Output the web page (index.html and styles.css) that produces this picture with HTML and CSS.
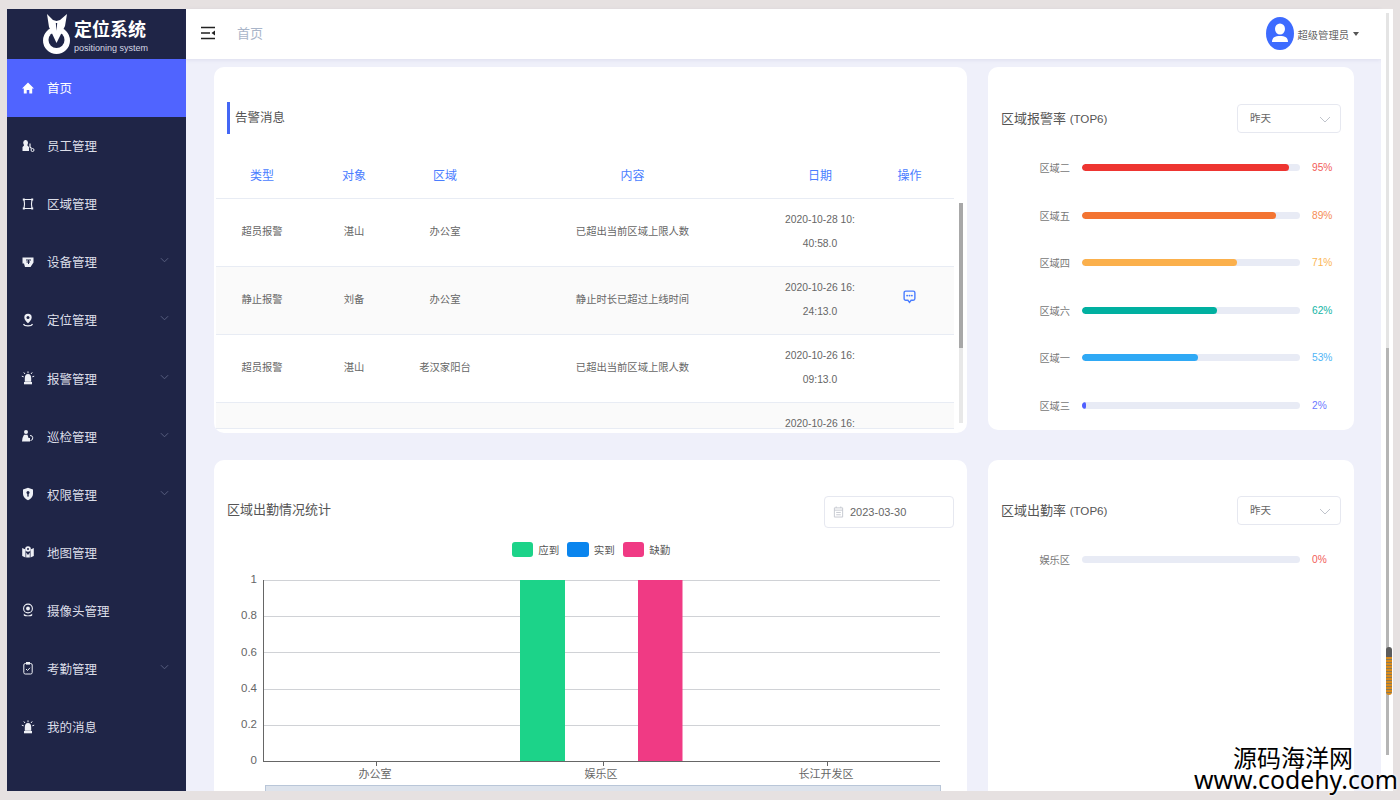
FILE: index.html
```html
<!DOCTYPE html>
<html lang="zh-CN">
<head>
    <meta charset="UTF-8">
    <title>定位系统</title>
    <link rel="stylesheet" href="styles.css">
</head>
<body>
    <div class="app">
        <aside class="sidebar">
            <div class="brand">
                <svg class="brand-logo" viewBox="0 0 27 40">
                    <circle cx="13.5" cy="26.5" r="13.5" fill="#fff"/>
                    <circle cx="13.5" cy="26" r="8" fill="#1f2547"/>
                    <path d="M4 0 L10 6 L13.5 7 L17 6 L24 0 L22 12 L13.5 29 L6 13 Z" fill="#fff"/>
                    <path d="M12.8 9 L13.5 17 L14.2 9 Z" fill="#1f2547"/>
                </svg>
                <div class="brand-text">
                    <div class="brand-name">定位系统</div>
                    <div class="brand-sub">positioning system</div>
                </div>
            </div>
            <nav class="menu">
                <a class="menu-item active">
                    <svg class="menu-icon" viewBox="0 0 14 14"><path d="M7 1.5 L13 7.5 L11.2 7.5 L11.2 12.5 L8.3 12.5 L8.3 9 L5.7 9 L5.7 12.5 L2.8 12.5 L2.8 7.5 L1 7.5 Z" fill="#fff"/></svg>
                    <span>首页</span>
                </a>
                <a class="menu-item">
                    <svg class="menu-icon" viewBox="0 0 14 14"><path d="M4.5 1 A2.3 2.8 0 0 1 7 3.5 C7 5 6.4 5.5 6.4 6.5 L8 8 L8 12 L1.5 12 L1.5 8 L3 6.5 C3 5.5 2.2 5 2.2 3.5 A2.2 2.8 0 0 1 4.5 1 Z" fill="#eef0f6"/><path d="M9 4.5 L9 8 L10.5 9.5" stroke="#eef0f6" fill="none" stroke-width="1.2"/><circle cx="11.5" cy="11" r="1.5" stroke="#eef0f6" fill="none"/></svg>
                    <span>员工管理</span>
                </a>
                <a class="menu-item">
                    <svg class="menu-icon" viewBox="0 0 14 14"><path d="M3 2.5 H11 C10.4 5 10.4 9 11 11.5 H3 C3.6 9 3.6 5 3 2.5 Z" stroke="#eef0f6" fill="none" stroke-width="1.1"/><rect x="1.8" y="1.5" width="2" height="2" fill="#eef0f6"/><rect x="10.2" y="1.5" width="2" height="2" fill="#eef0f6"/><rect x="1.8" y="10.5" width="2" height="2" fill="#eef0f6"/><rect x="10.2" y="10.5" width="2" height="2" fill="#eef0f6"/></svg>
                    <span>区域管理</span>
                </a>
                <a class="menu-item has-sub">
                    <svg class="menu-icon" viewBox="0 0 14 14"><path d="M1.5 2.5 H12.5 V7.5 L9.5 12 H4 L3 8.5 H1.5 Z" fill="#eef0f6"/><path d="M5 5 H10 M7.5 5 V9 M5.5 7 H9" stroke="#1f2547" stroke-width="1" fill="none"/></svg>
                    <span>设备管理</span>
                    <svg class="menu-arrow" viewBox="0 0 10 6"><path d="M1 1 L5 5 L9 1" fill="none" stroke="currentColor"/></svg>
                </a>
                <a class="menu-item has-sub">
                    <svg class="menu-icon" viewBox="0 0 14 14"><path d="M7 .8 A3.7 3.7 0 0 1 10.7 4.5 C10.7 6.8 8.3 9 7 10.2 C5.7 9 3.3 6.8 3.3 4.5 A3.7 3.7 0 0 1 7 .8 Z" fill="#eef0f6"/><circle cx="7" cy="4.5" r="1.5" fill="#1f2547"/><path d="M2.5 11 C3.5 13.5 10.5 13.5 11.5 11" stroke="#eef0f6" fill="none" stroke-width="1.1"/></svg>
                    <span>定位管理</span>
                    <svg class="menu-arrow" viewBox="0 0 10 6"><path d="M1 1 L5 5 L9 1" fill="none" stroke="currentColor"/></svg>
                </a>
                <a class="menu-item has-sub">
                    <svg class="menu-icon" viewBox="0 0 14 14"><path d="M7 3 C9.3 3 10.2 4.8 10.2 7 V10.8 H3.8 V7 C3.8 4.8 4.7 3 7 3 Z" fill="#eef0f6"/><rect x="3" y="11" width="8" height="2.3" fill="#eef0f6"/><path d="M7 .4 V2.2 M2.8 1.4 L4 3 M11.2 1.4 L10 3 M.8 5.2 L2.7 5.8 M13.2 5.2 L11.3 5.8" stroke="#eef0f6" fill="none"/></svg>
                    <span>报警管理</span>
                    <svg class="menu-arrow" viewBox="0 0 10 6"><path d="M1 1 L5 5 L9 1" fill="none" stroke="currentColor"/></svg>
                </a>
                <a class="menu-item has-sub">
                    <svg class="menu-icon" viewBox="0 0 14 14"><circle cx="5" cy="3" r="2" fill="#eef0f6"/><path d="M3 5.8 H6.5 L7.5 9 H9 V12.5 H1 L1.5 9 Z" fill="#eef0f6"/><path d="M9 6.5 A2.5 2.5 0 1 1 9.5 11.5" stroke="#eef0f6" fill="none"/></svg>
                    <span>巡检管理</span>
                    <svg class="menu-arrow" viewBox="0 0 10 6"><path d="M1 1 L5 5 L9 1" fill="none" stroke="currentColor"/></svg>
                </a>
                <a class="menu-item has-sub">
                    <svg class="menu-icon" viewBox="0 0 14 14"><path d="M7 .8 L12 2.6 V7 C12 10 9.5 12 7 13.2 C4.5 12 2 10 2 7 V2.6 Z" fill="#eef0f6"/><circle cx="7" cy="5.5" r="1.5" fill="#1f2547"/><rect x="6.3" y="6" width="1.4" height="3.6" fill="#1f2547"/></svg>
                    <span>权限管理</span>
                    <svg class="menu-arrow" viewBox="0 0 10 6"><path d="M1 1 L5 5 L9 1" fill="none" stroke="currentColor"/></svg>
                </a>
                <a class="menu-item">
                    <svg class="menu-icon" viewBox="0 0 14 14"><path d="M1.2 3 L4.5 4.5 L4.5 12.5 L1.2 11 Z M9.5 4.5 L12.8 3 L12.8 11 L9.5 12.5 Z M5.2 7.5 L7 10 L8.8 7.5 V12.5 H5.2 Z" fill="#eef0f6"/><circle cx="7" cy="4" r="2.8" fill="#eef0f6"/><circle cx="7" cy="4" r="1" fill="#1f2547"/></svg>
                    <span>地图管理</span>
                </a>
                <a class="menu-item">
                    <svg class="menu-icon" viewBox="0 0 14 14"><circle cx="7" cy="5.5" r="4.4" fill="none" stroke="#eef0f6" stroke-width="1.1"/><circle cx="7" cy="5.5" r="1.9" fill="#eef0f6"/><path d="M2.8 10.6 C4 13 10 13 11.2 10.6 V12.4 C10 13.6 4 13.6 2.8 12.4 Z" fill="#eef0f6"/></svg>
                    <span>摄像头管理</span>
                </a>
                <a class="menu-item has-sub">
                    <svg class="menu-icon" viewBox="0 0 14 14"><rect x="2.8" y="2.5" width="8.4" height="10.5" rx="1.5" fill="none" stroke="#eef0f6"/><rect x="5" y="1" width="4" height="2.6" fill="#eef0f6"/><path d="M5 8 L6.5 9.5 L9 6.8" stroke="#eef0f6" fill="none"/></svg>
                    <span>考勤管理</span>
                    <svg class="menu-arrow" viewBox="0 0 10 6"><path d="M1 1 L5 5 L9 1" fill="none" stroke="currentColor"/></svg>
                </a>
                <a class="menu-item">
                    <svg class="menu-icon" viewBox="0 0 14 14"><path d="M7 3 C9.3 3 10.2 4.8 10.2 7 V10.8 H3.8 V7 C3.8 4.8 4.7 3 7 3 Z" fill="#eef0f6"/><rect x="3" y="11" width="8" height="2.3" fill="#eef0f6"/><path d="M7 .4 V2.2 M2.8 1.4 L4 3 M11.2 1.4 L10 3 M.8 5.2 L2.7 5.8 M13.2 5.2 L11.3 5.8" stroke="#eef0f6" fill="none"/></svg>
                    <span>我的消息</span>
                </a>
            </nav>
        </aside>

        <div class="content">
            <header class="topbar">
                <svg class="fold-icon" viewBox="0 0 14 14"><path d="M0 1.5 H14 M0 7 H9 M0 12.5 H14" stroke="#222" stroke-width="1.6" fill="none"/><path d="M14 4.5 V9.5 L10.5 7 Z" fill="#222"/></svg>
                <span class="crumb">首页</span>
                <div class="user">
                    <svg class="avatar" viewBox="0 0 28 33">
                        <ellipse cx="14" cy="16.5" rx="14" ry="16.5" fill="#3d6bff"/>
                        <ellipse cx="14" cy="12" rx="5" ry="5.5" fill="#fff"/>
                        <path d="M6 25 C6 20.5 9 19 14 19 C19 19 22 20.5 22 25 Z" fill="#fff"/>
                    </svg>
                    <span class="user-name">超级管理员</span>
                    <span class="caret"></span>
                </div>
            </header>

            <main class="main">
                <section class="card card-alarm">
                    <div class="alarm-title">告警消息</div>
                    <div class="table-wrap">
                        <table class="alarm-table">
                            <colgroup>
                                <col class="col-a"><col class="col-a"><col class="col-b"><col class="col-c"><col class="col-b"><col class="col-d">
                            </colgroup>
                            <thead>
                                <tr><th>类型</th><th>对象</th><th>区域</th><th>内容</th><th>日期</th><th>操作</th></tr>
                            </thead>
                            <tbody>
                                <tr><td>超员报警</td><td>湛山</td><td>办公室</td><td>已超出当前区域上限人数</td><td class="date">2020-10-28 10:40:58.0</td><td></td></tr>
                                <tr><td>静止报警</td><td>刘备</td><td>办公室</td><td>静止时长已超过上线时间</td><td class="date">2020-10-26 16:24:13.0</td><td>
                                    <svg class="chat-icon" viewBox="0 0 12 13"><path d="M2.5 1 H9.5 A1.5 1.5 0 0 1 11 2.5 V8 A1.5 1.5 0 0 1 9.5 9.5 H7.5 L6 11.5 L4.5 9.5 H2.5 A1.5 1.5 0 0 1 1 8 V2.5 A1.5 1.5 0 0 1 2.5 1 Z" fill="none" stroke="#4a7dff" stroke-width="1.3"/><circle cx="3.8" cy="5.2" r=".9" fill="#4a7dff"/><circle cx="6" cy="5.2" r=".9" fill="#4a7dff"/><circle cx="8.2" cy="5.2" r=".9" fill="#4a7dff"/></svg>
                                </td></tr>
                                <tr><td>超员报警</td><td>湛山</td><td>老汉家阳台</td><td>已超出当前区域上限人数</td><td class="date">2020-10-26 16:09:13.0</td><td></td></tr>
                                <tr><td></td><td></td><td></td><td></td><td class="date">2020-10-26 16:05:13.0</td><td></td></tr>
                            </tbody>
                        </table>
                    </div>
                    <div class="table-scroll"><div class="table-thumb"></div></div>
                </section>

                <section class="card card-rate">
                    <div class="rate-head">
                        <span class="card-title">区域报警率 <span class="title-latin">(TOP6)</span></span>
                        <div class="select">昨天
                            <svg class="select-arrow" viewBox="0 0 12 7"><path d="M1 1 L6 6 L11 1" fill="none" stroke="currentColor"/></svg>
                        </div>
                    </div>
                    <div class="rate-list">
                        <div class="rate-row c-red"><span class="rate-name">区域二</span><div class="rate-track"><div class="rate-fill" style="width: 95%"></div></div><span class="rate-val">95%</span></div>
                        <div class="rate-row c-orange"><span class="rate-name">区域五</span><div class="rate-track"><div class="rate-fill" style="width: 89%"></div></div><span class="rate-val">89%</span></div>
                        <div class="rate-row c-yellow"><span class="rate-name">区域四</span><div class="rate-track"><div class="rate-fill" style="width: 71%"></div></div><span class="rate-val">71%</span></div>
                        <div class="rate-row c-teal"><span class="rate-name">区域六</span><div class="rate-track"><div class="rate-fill" style="width: 62%"></div></div><span class="rate-val">62%</span></div>
                        <div class="rate-row c-sky"><span class="rate-name">区域一</span><div class="rate-track"><div class="rate-fill" style="width: 53%"></div></div><span class="rate-val">53%</span></div>
                        <div class="rate-row c-blue"><span class="rate-name">区域三</span><div class="rate-track"><div class="rate-fill" style="width: 2%"></div></div><span class="rate-val">2%</span></div>
                    </div>
                </section>

                <section class="card card-chart">
                    <div class="chart-head">
                        <span class="card-title">区域出勤情况统计</span>
                        <div class="date-picker">
                            <svg class="date-icon" viewBox="0 0 12 13"><path d="M1.5 2 H10.5 V12 H1.5 Z M1.5 4.5 H10.5 M3.5 7 H8.5 M3.5 9.5 H8.5 M3.5 .5 V2 M8.5 .5 V2" fill="none" stroke="#c3c6ce"/></svg>
                            2023-03-30
                        </div>
                    </div>
                    <div class="legend">
                        <span class="legend-item"><i class="swatch s-green"></i>应到</span>
                        <span class="legend-item"><i class="swatch s-blue"></i>实到</span>
                        <span class="legend-item"><i class="swatch s-pink"></i>缺勤</span>
                    </div>
                    <svg class="chart" viewBox="214 566 753 230">
                        <g class="grid">
                            <line x1="263" x2="940" y1="580.5" y2="580.5"/>
                            <line x1="263" x2="940" y1="616.5" y2="616.5"/>
                            <line x1="263" x2="940" y1="652.5" y2="652.5"/>
                            <line x1="263" x2="940" y1="689.5" y2="689.5"/>
                            <line x1="263" x2="940" y1="725.5" y2="725.5"/>
                        </g>
                        <rect x="520" y="580" width="45" height="181" fill="#1cd389"/>
                        <rect x="638" y="580" width="44.5" height="181" fill="#f03a84"/>
                        <g class="axis">
                            <line x1="263.5" x2="263.5" y1="580" y2="762"/>
                            <line x1="263" x2="940" y1="761.5" y2="761.5"/>
                            <line x1="376.5" x2="376.5" y1="762" y2="766"/>
                            <line x1="603.5" x2="603.5" y1="762" y2="766"/>
                            <line x1="827.5" x2="827.5" y1="762" y2="766"/>
                        </g>
                        <g class="y-labels">
                            <text x="257" y="583">1</text>
                            <text x="257" y="619">0.8</text>
                            <text x="257" y="656">0.6</text>
                            <text x="257" y="692">0.4</text>
                            <text x="257" y="728">0.2</text>
                            <text x="257" y="764">0</text>
                        </g>
                        <g class="x-labels">
                            <text x="375" y="778">办公室</text>
                            <text x="601" y="778">娱乐区</text>
                            <text x="826" y="778">长江开发区</text>
                        </g>
                        <rect class="zoom-bar" x="265.5" y="785.5" width="675" height="12"/>
                    </svg>
                </section>

                <section class="card card-rate card-rate-low">
                    <div class="rate-head">
                        <span class="card-title">区域出勤率 <span class="title-latin">(TOP6)</span></span>
                        <div class="select">昨天
                            <svg class="select-arrow" viewBox="0 0 12 7"><path d="M1 1 L6 6 L11 1" fill="none" stroke="currentColor"/></svg>
                        </div>
                    </div>
                    <div class="rate-list">
                        <div class="rate-row c-red"><span class="rate-name">娱乐区</span><div class="rate-track"><div class="rate-fill" style="width: 0%"></div></div><span class="rate-val">0%</span></div>
                    </div>
                </section>
            </main>
        </div>

        <div class="page-scroll">
            <div class="page-track"></div>
            <div class="page-thumb"></div>
        </div>
    </div>

    <div class="watermark">
        <div class="wm-cn">源码海洋网</div>
        <div class="wm-url">www.codehy.com</div>
    </div>
</body>
</html>
```

FILE: styles.css
```css
:root {
    --navy: #1f2547;
    --active: #5064ff;
    --page-bg: #eff0fa;
    --blue: #4a7dff;
    --text: #666;
    --line: #e8ecf4;
}

* {
    margin: 0;
    padding: 0;
    box-sizing: border-box;
    font-family: "Liberation Sans", "Noto Sans CJK SC", sans-serif;
}

html, body {
    height: 100%;
    overflow: hidden;
}

body {
    background-color: #e6e1e1;
    padding: 9px 7px;
}

.app {
    display: flex;
    height: 782px;
    background: var(--page-bg);
}

/* sidebar */
.sidebar {
    width: 179px;
    flex-shrink: 0;
    background: var(--navy);
}

.brand {
    height: 50px;
    display: flex;
    align-items: flex-start;
    padding: 5px 0 0 36px;
    gap: 4px;
}

.brand-logo {
    width: 27px;
    height: 40px;
}

.brand-name {
    color: #fff;
    font-size: 18px;
    font-weight: 700;
    line-height: 24px;
    margin-top: 4px;
    white-space: nowrap;
}

.brand-sub {
    color: #d5d8e4;
    font-size: 9px;
    line-height: 12px;
    white-space: nowrap;
}

.menu-item {
    display: flex;
    align-items: center;
    height: 58.1px;
    padding-left: 14px;
    padding-bottom: 1px;
    color: #dcdee8;
    font-size: 12.5px;
}

.menu-item.active {
    background: var(--active);
    color: #fff;
}

.menu-icon {
    width: 14px;
    height: 14px;
    margin-right: 12px;
    flex-shrink: 0;
}

.menu-arrow {
    width: 9px;
    height: 6px;
    margin-left: auto;
    margin-right: 17px;
    margin-bottom: 3px;
    color: #5e6484;
}

/* top bar + main */
.content {
    flex: 1;
    min-width: 0;
    display: flex;
    flex-direction: column;
}

.topbar {
    height: 50px;
    flex-shrink: 0;
    display: flex;
    align-items: center;
    background: #fff;
    padding: 0 22px 0 15px;
    box-shadow: 0 1px 4px rgba(90, 90, 160, 0.12);
    position: relative;
}

.fold-icon {
    width: 14px;
    height: 14px;
    margin-top: -3px;
}

.crumb {
    margin-left: 22px;
    margin-top: -3px;
    color: #a9b5c9;
    font-size: 13px;
}

.user {
    margin-left: auto;
    display: flex;
    align-items: center;
    margin-top: -1px;
}

.avatar {
    width: 28px;
    height: 33px;
}

.user-name {
    margin-left: 4px;
    margin-top: 2px;
    font-size: 10.3px;
    color: #666;
}

.caret {
    margin-left: 4px;
    border: 3.5px solid transparent;
    border-top: 4px solid #555;
    border-bottom: 0;
}

.main {
    flex: 1;
    min-height: 0;
    overflow: hidden;
    display: grid;
    grid-template-columns: 753px 366px;
    grid-template-rows: 366px 400px;
    column-gap: 21px;
    row-gap: 27px;
    padding: 8px 0 0 28px;
}

.card {
    background: #fff;
    border-radius: 10px;
    position: relative;
}

.card-title {
    font-size: 13px;
    color: #555;
    margin-bottom: 3px;
}

.title-latin {
    font-size: 11.6px;
}

/* alarm table */
.card-alarm {
    padding: 35px 13px 0 2px;
}

.alarm-title {
    margin-left: 11px;
    padding-left: 5px;
    height: 32px;
    line-height: 32px;
    border-left: 3px solid #4467f5;
    font-size: 12.5px;
    color: #555;
}

.table-wrap {
    margin-top: 21px;
    height: 274px;
    overflow: hidden;
    border-bottom: 1px solid var(--line);
}

.alarm-table {
    width: 738px;
    table-layout: fixed;
    border-collapse: collapse;
    font-size: 10.3px;
    color: var(--text);
    text-align: center;
}

.col-a { width: 92px; }
.col-b { width: 90px; }
.col-c { width: 285px; }
.col-d { width: 89px; }

.alarm-table th {
    height: 43px;
    padding-bottom: 4px;
    font-size: 12px;
    font-weight: 400;
    color: var(--blue);
    border-bottom: 1px solid var(--line);
}

.alarm-table td {
    height: 68px;
    line-height: 24px;
    padding: 0 8px;
    border-bottom: 1px solid var(--line);
}

.alarm-table tbody tr:nth-child(even) {
    background: #fafafa;
}

.date {
    word-break: break-all;
}

.chat-icon {
    width: 13px;
    height: 14px;
    display: block;
    margin: -6px auto 0;
}

.table-scroll {
    position: absolute;
    left: 745px;
    top: 136px;
    width: 4px;
    height: 220px;
    background: #e8e8e8;
}

.table-thumb {
    height: 145px;
    background: #a8a8a8;
}

/* right side rates */
.card-rate {
    height: 363px;
    overflow: hidden;
    padding: 37px 13px 0 13px;
}

.card-rate-low {
    height: 400px;
    padding-top: 36px;
}

.rate-head {
    display: flex;
    justify-content: space-between;
    align-items: center;
}

.select {
    width: 104px;
    height: 29px;
    line-height: 27px;
    padding-left: 12px;
    border: 1px solid #e6e8f0;
    border-radius: 4px;
    font-size: 10.5px;
    color: #666;
    position: relative;
}

.select-arrow {
    position: absolute;
    right: 9px;
    top: 11px;
    width: 12px;
    height: 7px;
    color: #c0c4cc;
}

.rate-list {
    margin-top: 22.5px;
    display: flex;
    flex-direction: column;
    gap: 23.5px;
}

.rate-row {
    display: flex;
    align-items: center;
    height: 24px;
}

.rate-name {
    width: 69px;
    text-align: right;
    font-size: 10.2px;
    color: #777;
    flex-shrink: 0;
}

.rate-track {
    width: 218px;
    height: 7px;
    margin-left: 12px;
    border-radius: 4px;
    background: #e8ebf5;
    overflow: hidden;
}

.rate-fill {
    height: 100%;
    border-radius: 4px;
}

.rate-val {
    margin-left: 12px;
    font-size: 10.2px;
}

.c-red .rate-fill { background: #ee3531; }
.c-red .rate-val { color: #f25c59; }
.c-orange .rate-fill { background: #f37432; }
.c-orange .rate-val { color: #f58c55; }
.c-yellow .rate-fill { background: #fbb04c; }
.c-yellow .rate-val { color: #fbb654; }
.c-teal .rate-fill { background: #00b0a0; }
.c-teal .rate-val { color: #14b5a6; }
.c-sky .rate-fill { background: #2fa9f5; }
.c-sky .rate-val { color: #4fb5f6; }
.c-blue .rate-fill { background: #5060ff; }
.c-blue .rate-val { color: #6b78ff; }

/* attendance chart */
.card-chart {
    height: 400px;
    padding-top: 36px;
}

.chart-head {
    display: flex;
    justify-content: space-between;
    align-items: center;
    padding: 0 13px;
}

.chart-head .card-title {
    margin-bottom: 7px;
}

.date-picker {
    width: 130px;
    height: 32px;
    display: flex;
    align-items: center;
    padding-left: 8px;
    gap: 6px;
    border: 1px solid #e6e8f0;
    border-radius: 4px;
    font-size: 11px;
    color: #666;
}

.date-icon {
    width: 11px;
    height: 12px;
}

.legend {
    display: flex;
    justify-content: center;
    gap: 8px;
    margin-top: 14px;
    margin-left: 1px;
    height: 15px;
}

.legend-item {
    display: flex;
    align-items: center;
    font-size: 10.5px;
    color: #555;
    gap: 5px;
}

.swatch {
    width: 21.5px;
    height: 15px;
    border-radius: 3px;
}

.s-green { background: #1cd389; }
.s-blue { background: #0a85ee; }
.s-pink { background: #f03a84; }

.chart {
    display: block;
    width: 753px;
    height: 230px;
    margin-top: 9px;
}

.chart text {
    fill: #666;
}

.grid line {
    stroke: #d0d2d6;
}

.axis line {
    stroke: #666;
}

.y-labels text {
    font-size: 11.5px;
    text-anchor: end;
}

.x-labels text {
    font-size: 11px;
    text-anchor: middle;
}

.zoom-bar {
    fill: #dde3ec;
    stroke: #b9c6d8;
}

/* page scrollbar */
.page-scroll {
    width: 12px;
    flex-shrink: 0;
    background: #fff;
    position: relative;
}

.page-track {
    margin: 4px 0 0 5px;
    width: 3px;
    height: 742px;
    background: linear-gradient(#e4e4e4 335px, #b5b5b5 335px);
}

.page-thumb {
    position: absolute;
    left: 5px;
    top: 638px;
    width: 6px;
    height: 48px;
    border-radius: 3px;
    background: repeating-linear-gradient(#d88a1c 0 2px, #8a7a55 2px 3px);
    border-top: 10px solid #5c5c5c;
}

/* watermark laid over the page corner */
.watermark {
    position: absolute;
    right: 4px;
    top: 743px;
    width: 202px;
    text-align: center;
    color: #000;
    text-shadow: 0 0 3px #fff, 0 0 3px #fff;
}

.wm-cn {
    font-family: "Noto Sans CJK SC", sans-serif;
    font-size: 24px;
    line-height: 28px;
    margin-left: -4px;
}

.wm-url {
    font-family: "Noto Sans", sans-serif;
    font-size: 24.8px;
    line-height: 17px;
    white-space: nowrap;
}
```
